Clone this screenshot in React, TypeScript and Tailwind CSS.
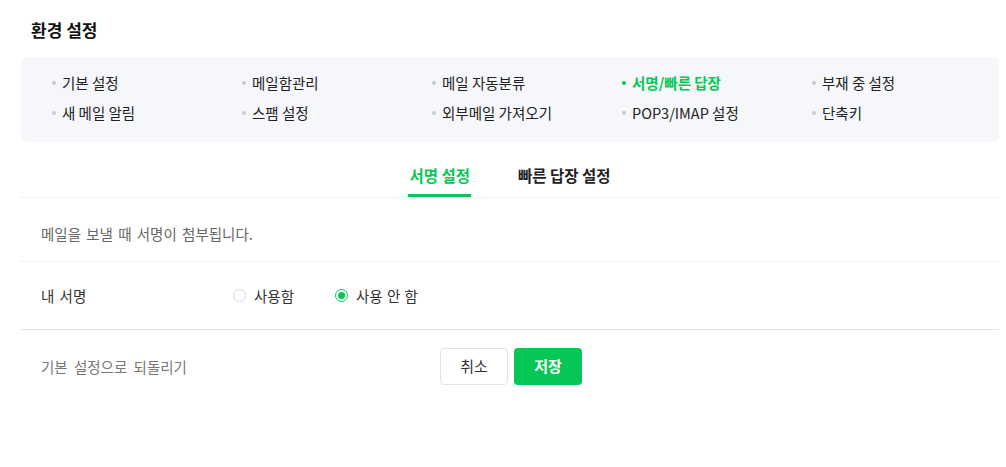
import { useState } from 'react';

const menu = [
  ['기본 설정', '메일함관리', '메일 자동분류', '서명/빠른 답장', '부재 중 설정'],
  ['새 메일 알림', '스팸 설정', '외부메일 가져오기', 'POP3/IMAP 설정', '단축키'],
];

export default function App() {
  const [tab, setTab] = useState<'sign' | 'quick'>('sign');
  const [useSign, setUseSign] = useState(false);

  return (
    <div className="w-[1006px] h-[467px] bg-white font-['Noto_Sans_CJK_KR',sans-serif] text-[#222]">
      <div className="pl-[21px] pr-[7px]">
        <h1 className="pt-5 pl-[10px] text-[17px] leading-5 font-bold text-[#111] mb-[17px]">환경 설정</h1>

        <div className="rounded-md bg-[#f6f7fa] pl-[31px] pt-4 pb-[19px] grid grid-cols-[repeat(5,190px)] gap-y-[10px]">
          {menu.flat().map((label) => {
            const active = label === '서명/빠른 답장';
            return (
              <div key={label} className="flex items-center gap-[6px] h-5">
                <span className={`w-1 h-1 rounded-full ${active ? 'bg-[#06c755]' : 'bg-[#c9cbd0]'}`} />
                <span className={`text-[14.5px] leading-5 ${active ? 'text-[#06c755] font-bold' : 'text-[#222]'}`}>{label}</span>
              </div>
            );
          })}
        </div>

        <div className="flex justify-center gap-[46px] border-b border-[#f0f0f0]">
          <button
            onClick={() => setTab('sign')}
            className={`pt-[23px] pb-[9px] px-px border-b-[3px] text-[15.5px] leading-5 font-bold ${
              tab === 'sign' ? 'border-[#06c755] text-[#06c755]' : 'border-transparent text-[#222]'
            }`}
          >
            서명 설정
          </button>
          <button
            onClick={() => setTab('quick')}
            className={`pt-[23px] pb-[9px] px-px border-b-[3px] text-[15.5px] leading-5 font-bold ${
              tab === 'quick' ? 'border-[#06c755] text-[#06c755]' : 'border-transparent text-[#222]'
            }`}
          >
            빠른 답장 설정
          </button>
        </div>

        <p className="pl-5 pt-[26px] pb-[17px] text-[14.5px] leading-5 [word-spacing:2px] text-[#666] border-b border-[#f0f0f0]">
          메일을 보낼 때 서명이 첨부됩니다.
        </p>

        <div className="flex items-center h-[68px] pl-5 border-b border-[#e2e2e2]">
          <span className="w-[192px] text-[14.5px] leading-5 [word-spacing:2px] text-[#333]">내 서명</span>
          <label className="flex items-center gap-2 cursor-pointer" onClick={() => setUseSign(true)}>
            <span className={`w-[13px] h-[13px] rounded-full border flex items-center justify-center bg-white ${useSign ? 'border-[#06c755]' : 'border-[#d6d8dd]'}`}>
              {useSign && <span className="w-[7px] h-[7px] rounded-full bg-[#06c755]" />}
            </span>
            <span className="text-[14.5px] leading-5 text-[#333]">사용함</span>
          </label>
          <label className="flex items-center gap-2 ml-[41px] cursor-pointer" onClick={() => setUseSign(false)}>
            <span className={`w-[13px] h-[13px] rounded-full border flex items-center justify-center bg-white ${!useSign ? 'border-[#06c755]' : 'border-[#d6d8dd]'}`}>
              {!useSign && <span className="w-[7px] h-[7px] rounded-full bg-[#06c755]" />}
            </span>
            <span className="text-[14.5px] leading-5 [word-spacing:1px] text-[#333]">사용 안 함</span>
          </label>
        </div>

        <div className="flex items-center pl-5 pt-[18px]">
          <span className="w-[399px] text-[14.5px] leading-5 [word-spacing:3px] text-[#777]">기본 설정으로 되돌리기</span>
          <div className="flex gap-[6px]">
            <button className="w-[68px] h-[37px] rounded border border-[#e3e3e3] bg-white text-[15px] text-[#333]">취소</button>
            <button className="w-[68px] h-[37px] rounded bg-[#06c755] text-[15px] font-bold text-white">저장</button>
          </div>
        </div>
      </div>
    </div>
  );
}
